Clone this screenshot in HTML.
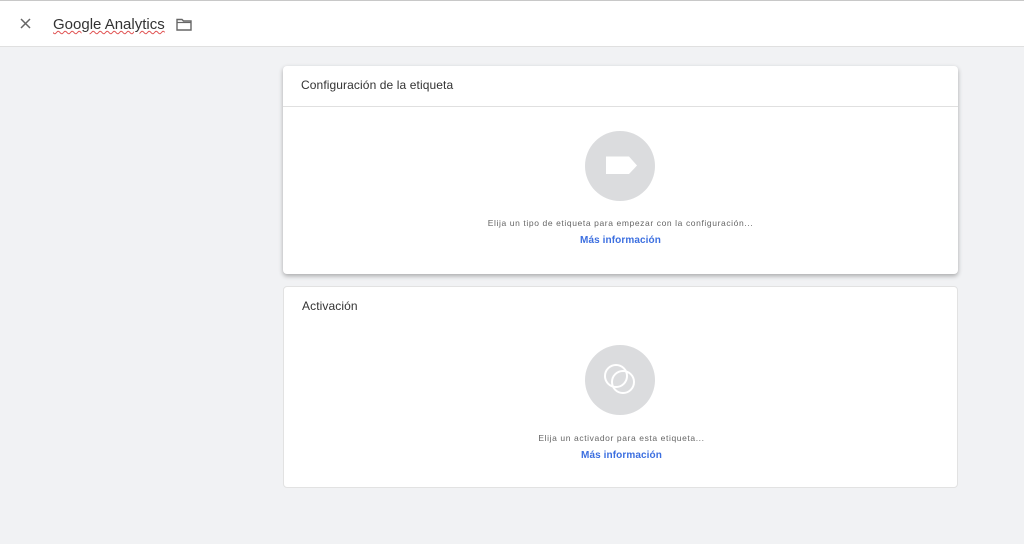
<!DOCTYPE html>
<html><head><style>
body{margin:0;width:1024px;height:544px;background:#f1f2f4;font-family:"Liberation Sans",Arial,sans-serif;position:relative;overflow:hidden}
.top{position:absolute;left:0;top:0;width:1024px;height:47px;background:#fff;border-top:1px solid #c8c8c8;border-bottom:1px solid #e0e0e0;box-sizing:border-box}
.card{position:absolute;left:283px;width:675px;background:#fff;border-radius:4px}
.c1{top:66px;height:208px;box-shadow:0 2px 5px rgba(0,0,0,.3)}
.c2{top:286px;height:202px;border:1px solid #e2e2e2;box-sizing:border-box}
.h{font-size:12px;color:#333;position:absolute;left:18px;letter-spacing:.1px}
.circ{position:absolute;left:302px;width:70px;height:70px;border-radius:50%;background:#dbdcde}
.t{position:absolute;left:0;width:675px;text-align:center;font-size:8.5px;color:#666;letter-spacing:.6px}
.l{position:absolute;left:0;width:675px;text-align:center;font-size:10px;color:#3c6fe0;font-weight:bold;letter-spacing:.1px}
</style></head><body>
<div class="top">
<svg style="position:absolute;left:20px;top:17px" width="11" height="11"><path d="M1 1L10 10M10 1L1 10" stroke="#666" stroke-width="1.5"/></svg>
<div style="position:absolute;left:53px;top:15px;font-size:15px;color:#333;text-decoration:underline wavy #e05050;text-decoration-thickness:1px">Google Analytics</div>
<svg style="position:absolute;left:176px;top:17px" width="16" height="13"><path d="M1 1.5H6L7.5 3H15V12H1Z" fill="none" stroke="#666" stroke-width="1.4"/><path d="M1 4.5H15" stroke="#666" stroke-width="1.2"/></svg>
</div>
<div class="card c1">
<div class="h" style="top:12px">Configuración de la etiqueta</div>
<div style="position:absolute;left:0;top:40px;width:675px;height:1px;background:#e0e0e0"></div>
<div class="circ" style="top:65px"><svg style="position:absolute;left:18px;top:24px" width="36" height="22"><path d="M3 1.5H26L34 10.5L26 19H3Z" fill="#fff"/></svg></div>
<div class="t" style="top:152px">Elija un tipo de etiqueta para empezar con la configuración...</div>
<div class="l" style="top:169px">Más información</div>
</div>
<div class="card c2">
<div class="h" style="top:12px">Activación</div>
<div class="circ" style="top:58px;left:301px"><svg style="position:absolute;left:0;top:0" width="70" height="70"><circle cx="31" cy="31" r="11" fill="none" stroke="#fff" stroke-width="2"/><circle cx="38" cy="37" r="11" fill="none" stroke="#fff" stroke-width="2"/></svg></div>
<div class="t" style="top:146px">Elija un activador para esta etiqueta...</div>
<div class="l" style="top:163px">Más información</div>
</div>
</body></html>
